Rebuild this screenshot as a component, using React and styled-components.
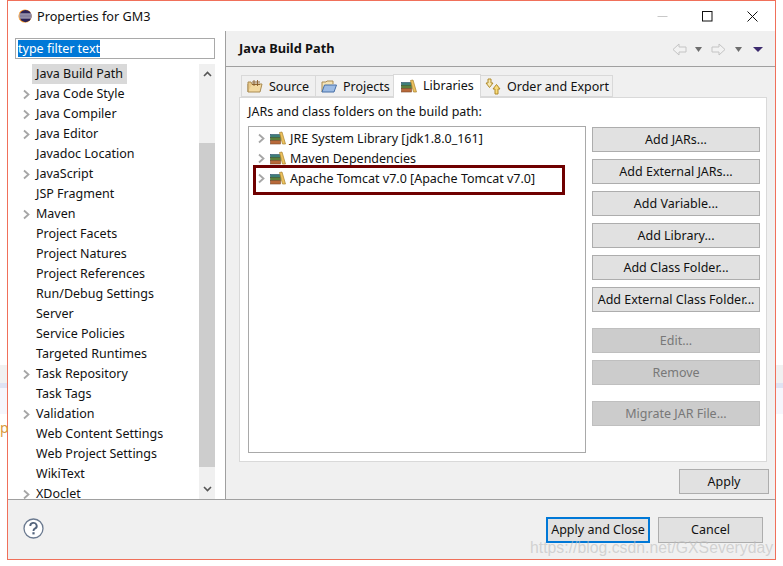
import React from "react";
import styled, { createGlobalStyle } from "styled-components";

const GlobalStyle = createGlobalStyle`
  html, body {
    margin: 0;
    background: #fff;
  }
  body {
    font-family: "Noto Sans", "Open Sans", sans-serif;
    font-size: 12.5px;
    color: #111;
  }
  * {
    box-sizing: border-box;
  }
`;

const Page = styled.div`
  position: relative;
  width: 783px;
  height: 566px;
  overflow: hidden;
  padding-left: 7px;
`;

const BackdropStrip = styled.div`
  position: absolute;
  left: ${(p) => (p.$right ? "776px" : "0")};
  top: ${(p) => p.$top}px;
  width: 7px;
  height: ${(p) => p.$height}px;
  background: ${(p) => p.$color};
`;

const BackdropLetter = styled.span`
  position: absolute;
  left: 0;
  top: 418px;
  color: #d89a3c;
  font-size: 14px;
`;

const Window = styled.div`
  width: 769px;
  height: 560px;
  border: 1px solid #f0705a;
  background: #fff;
  display: flex;
  flex-direction: column;
`;

const TitleBar = styled.div`
  height: 30px;
  flex: none;
  display: flex;
  align-items: center;
  padding-left: 10px;
`;

const TitleText = styled.span`
  flex: 1;
  margin-left: 5px;
  font-size: 12.7px;
`;

const WindowButton = styled.div`
  width: 45px;
  height: 30px;
  display: flex;
  align-items: center;
  justify-content: center;
`;

const Main = styled.div`
  flex: 1;
  min-height: 0;
  display: flex;
`;

const Sidebar = styled.div`
  width: 217px;
  flex: none;
  padding: 7px 0 0 7px;
  display: flex;
  flex-direction: column;
  background: #fff;
`;

const FilterBox = styled.div`
  width: 200px;
  height: 21px;
  border: 1px solid #a9a9a9;
  flex: none;
  display: flex;
  align-items: center;
  padding-left: 2px;
`;

const Selected = styled.span`
  background: #0078d7;
  color: #fff;
  line-height: 17px;
`;

const TreeArea = styled.div`
  flex: 1;
  min-height: 0;
  margin-top: 5px;
  display: flex;
  width: 200px;
  overflow: hidden;
`;

const Tree = styled.div`
  flex: 1;
  overflow: hidden;
`;

const TreeRow = styled.div`
  height: 20px;
  display: flex;
  align-items: center;
  padding-left: 7px;
  white-space: nowrap;
`;

const ArrowSlot = styled.div`
  width: 9px;
  margin-right: 5px;
  flex: none;
  display: flex;
  align-items: center;
`;

const TreeLabel = styled.span`
  padding: 0 4px;
  margin-left: -4px;
  line-height: 20px;
  background: ${(p) => (p.$active ? "#d9d9d9" : "transparent")};
`;

const Scrollbar = styled.div`
  width: 16px;
  flex: none;
  background: #f0f0f0;
  display: flex;
  flex-direction: column;
  align-items: center;
`;

const ScrollButton = styled.div`
  height: 20px;
  flex: none;
  display: flex;
  align-items: center;
  justify-content: center;
`;

const ScrollThumb = styled.div`
  width: 16px;
  height: 324px;
  margin-top: 59px;
  flex: none;
  background: #cdcdcd;
`;

const ScrollGap = styled.div`
  flex: 1;
`;

const Content = styled.div`
  flex: 1;
  min-width: 0;
  border-left: 1px solid #a0a0a0;
  background: #f0f0f0;
  display: flex;
  flex-direction: column;
`;

const ContentHeader = styled.div`
  height: 36px;
  flex: none;
  display: flex;
  align-items: center;
  justify-content: space-between;
  padding: 0 12px 2px 13px;
  border-bottom: 1px solid #a0a0a0;
`;

const HeaderTitle = styled.span`
  font-weight: 700;
  font-size: 12.8px;
`;

const NavIcons = styled.div`
  display: flex;
  align-items: center;
  padding-top: 3px;
`;

const NavSlot = styled.div`
  display: flex;
  align-items: center;
  margin-left: ${(p) => p.$gap}px;
`;

const ContentBody = styled.div`
  flex: 1;
  min-height: 0;
  padding: 8px 7px 0 13px;
  display: flex;
  flex-direction: column;
`;

const TabStrip = styled.div`
  height: 22px;
  flex: none;
  display: flex;
  align-items: flex-end;
  padding-left: 3px;
  position: relative;
  z-index: 1;
`;

const Tab = styled.div`
  height: ${(p) => (p.$active ? 24 : 22)}px;
  width: ${(p) => p.$width}px;
  margin-bottom: ${(p) => (p.$active ? -1 : 0)}px;
  padding-left: ${(p) => p.$pad}px;
  padding-bottom: ${(p) => (p.$active ? 2 : 0)}px;
  display: flex;
  align-items: center;
  gap: ${(p) => p.$iconGap}px;
  flex: none;
  background: ${(p) => (p.$active ? "#fff" : "#f0f0f0")};
  border: 1px solid #d9d9d9;
  border-bottom: ${(p) => (p.$active ? "none" : "1px solid #d9d9d9")};
  margin-left: -1px;
  white-space: nowrap;
`;

const TabPanel = styled.div`
  width: 528px;
  height: 365px;
  flex: none;
  background: #fff;
  border: 1px solid #d9d9d9;
  padding: 5px 8px 0;
  display: flex;
  flex-direction: column;
`;

const PanelLabel = styled.div`
  height: 18px;
  line-height: 18px;
  flex: none;
`;

const PanelRow = styled.div`
  display: flex;
  margin-top: 5px;
  gap: 6px;
`;

const ListBox = styled.div`
  width: 338px;
  height: 327px;
  flex: none;
  border: 1px solid #a9a9a9;
  padding: 1px 0 0 8px;
`;

const ListRow = styled.div`
  height: 20px;
  display: flex;
  align-items: center;
  white-space: nowrap;
  gap: 4px;
`;

const ButtonColumn = styled.div`
  width: 168px;
  flex: none;
  margin-top: 1px;
  display: flex;
  flex-direction: column;
  gap: 7px;
`;

const Button = styled.div`
  height: ${(p) => p.$height || 25}px;
  width: ${(p) => (p.$width ? `${p.$width}px` : "auto")};
  flex: none;
  display: flex;
  align-items: center;
  justify-content: center;
  padding-bottom: ${(p) => (p.$height ? 2 : 0)}px;
  white-space: nowrap;
  background: ${(p) => (p.$disabled ? "#cccccc" : "#e1e1e1")};
  color: ${(p) => (p.$disabled ? "#787878" : "#111")};
  border: ${(p) =>
    p.$default ? "2px solid #0078d7" : `1px solid ${p.$disabled ? "#bfbfbf" : "#adadad"}`};
  margin-top: ${(p) => p.$top || 0}px;
`;

const ApplyRow = styled.div`
  flex: none;
  display: flex;
  justify-content: flex-end;
  padding-top: 7px;
  margin-right: -1px;
`;

const Footer = styled.div`
  height: 60px;
  flex: none;
  background: #f0f0f0;
  border-top: 1px solid #a0a0a0;
  display: flex;
  align-items: flex-start;
  padding: 17px 12px 0 15px;
  gap: 8px;
`;

const HelpSlot = styled.div`
  flex: 1;
  padding-top: 1px;
`;

const Highlight = styled.div`
  position: absolute;
  left: 253px;
  top: 165px;
  width: 312px;
  height: 30px;
  border: 3px solid #6f0000;
  pointer-events: none;
`;

const Watermark = styled.div`
  position: absolute;
  left: 530px;
  top: 539px;
  font-family: "Liberation Sans", sans-serif;
  font-size: 15.8px;
  color: rgba(190, 190, 190, 0.62);
  white-space: nowrap;
`;

const Chevron = () => (
  <svg width="9" height="11" viewBox="0 0 9 11">
    <path d="M2 1.5 L6.5 5.5 L2 9.5" fill="none" stroke="#a6a6a6" strokeWidth="1.8" />
  </svg>
);

const LibraryIcon = () => (
  <svg width="16" height="14" viewBox="0 0 16 14">
    <rect x="0.5" y="3.5" width="10" height="3" fill="#3e7f78" stroke="#2b4f6a" strokeWidth="0.6" />
    <rect x="0.5" y="6.5" width="10" height="3" fill="#5d7f3a" stroke="#3d5a2c" strokeWidth="0.6" />
    <rect x="0.5" y="9.5" width="10" height="3.5" fill="#b8693a" stroke="#7c4a2a" strokeWidth="0.6" />
    <path d="M9.5 1.5 L12 1 L15.5 13 L12.5 13 Z" fill="#edc25e" stroke="#a8812e" strokeWidth="0.7" />
  </svg>
);

const SourceIcon = () => (
  <svg width="16" height="14" viewBox="0 0 16 14">
    <path d="M1 5 H15 L13 13 H1 Z" fill="#f3d9a0" stroke="#a98b52" />
    <path d="M1 13 V3 H4 L5 5" fill="#e9c98a" stroke="#a98b52" />
    <path d="M7 1 V7 M10.5 1 V7 M5 3 H13 M5 5.5 H13" fill="none" stroke="#8b5f2a" strokeWidth="0.9" />
  </svg>
);

const ProjectIcon = () => (
  <svg width="16" height="14" viewBox="0 0 16 14">
    <path d="M1 13 V3 H5 L6 2 H12 V5" fill="#f4e3b5" stroke="#a98b52" />
    <path d="M1 13 L3.5 6 H15.5 L13 13 Z" fill="#9cbbe4" stroke="#466fa6" />
  </svg>
);

const OrderIcon = () => (
  <svg width="17" height="17" viewBox="0 0 17 17">
    <path d="M4 1 H7 V5 H9 L5.5 9.5 L2 5 H4 Z" fill="#f6e8b0" stroke="#b08a2a" />
    <path d="M11 16 H14 V11 H16 L12.5 6.5 L9 11 H11 Z" fill="#f9dc7a" stroke="#b08a2a" />
  </svg>
);

const EclipseLogo = () => (
  <svg width="14" height="14" viewBox="0 0 16 16">
    <circle cx="8" cy="8" r="7.5" fill="#f7941e" />
    <circle cx="8.6" cy="8" r="7" fill="#2c2255" />
    <path d="M1.5 5.8 H15 M1 8 H15.5 M1.5 10.2 H15" stroke="#fff" strokeWidth="1" />
  </svg>
);

const NavArrow = ({ flip }) => (
  <svg width="15" height="13" viewBox="0 0 15 13" style={flip ? { transform: "scaleX(-1)" } : undefined}>
    <path d="M1 6.5 L7 1 V4 H14 V9 H7 V12 Z" fill="#f2f2f2" stroke="#c4c4c4" />
  </svg>
);

const Caret = ({ color, width = 7 }) => (
  <svg width={width} height="5" viewBox="0 0 8 5" preserveAspectRatio="none">
    <path d="M0 0 H8 L4 5 Z" fill={color} />
  </svg>
);

const HelpIcon = () => (
  <svg width="21" height="21" viewBox="0 0 21 21">
    <circle cx="10.5" cy="10.5" r="9.5" fill="#fff" stroke="#6b7a90" strokeWidth="1.3" />
    <path d="M7.3 8 A3.2 3 0 1 1 11.8 10.6 Q10.5 11.3 10.5 13" fill="none" stroke="#54647c" strokeWidth="1.9" />
    <rect x="9.4" y="14.2" width="2.2" height="2.2" fill="#54647c" />
  </svg>
);

const treeItems = [
  ["Java Build Path", false],
  ["Java Code Style", true],
  ["Java Compiler", true],
  ["Java Editor", true],
  ["Javadoc Location", false],
  ["JavaScript", true],
  ["JSP Fragment", false],
  ["Maven", true],
  ["Project Facets", false],
  ["Project Natures", false],
  ["Project References", false],
  ["Run/Debug Settings", false],
  ["Server", false],
  ["Service Policies", false],
  ["Targeted Runtimes", false],
  ["Task Repository", true],
  ["Task Tags", false],
  ["Validation", true],
  ["Web Content Settings", false],
  ["Web Project Settings", false],
  ["WikiText", false],
  ["XDoclet", true],
];

const libraries = [
  "JRE System Library [jdk1.8.0_161]",
  "Maven Dependencies",
  "Apache Tomcat v7.0 [Apache Tomcat v7.0]",
];

const sideButtons = [
  ["Add JARs...", 0, false],
  ["Add External JARs...", 0, false],
  ["Add Variable...", 0, false],
  ["Add Library...", 0, false],
  ["Add Class Folder...", 0, false],
  ["Add External Class Folder...", 0, false],
  ["Edit...", 9, true],
  ["Remove", 0, true],
  ["Migrate JAR File...", 9, true],
];

export default function App() {
  return (
    <Page>
      <GlobalStyle />
      <BackdropStrip $top={365} $height={18} $color="#f1f1f1" />
      <BackdropStrip $top={383} $height={5} $color="#dfe3f3" />
      <BackdropStrip $top={388} $height={26} $color="#f6f6fc" />
      <BackdropStrip $right $top={365} $height={18} $color="#f1f1f1" />
      <BackdropStrip $right $top={383} $height={5} $color="#dfe3f3" />
      <BackdropStrip $right $top={388} $height={26} $color="#f6f6fc" />
      <BackdropLetter>p</BackdropLetter>
      <Window>
        <TitleBar>
          <EclipseLogo />
          <TitleText>Properties for GM3</TitleText>
          <WindowButton>
            <svg width="11" height="11" viewBox="0 0 11 11">
              <path d="M0.5 5.5 H10.5" stroke="#c8c8c8" />
            </svg>
          </WindowButton>
          <WindowButton>
            <svg width="11" height="11" viewBox="0 0 11 11">
              <rect x="0.5" y="0.5" width="9.5" height="9.5" fill="none" stroke="#111" />
            </svg>
          </WindowButton>
          <WindowButton>
            <svg width="11" height="11" viewBox="0 0 11 11">
              <path d="M0.5 0.5 L10.5 10.5 M10.5 0.5 L0.5 10.5" stroke="#111" />
            </svg>
          </WindowButton>
        </TitleBar>
        <Main>
          <Sidebar>
            <FilterBox>
              <Selected>type filter text</Selected>
            </FilterBox>
            <TreeArea>
              <Tree>
                {treeItems.map(([label, hasChildren]) => (
                  <TreeRow key={label}>
                    <ArrowSlot>{hasChildren && <Chevron />}</ArrowSlot>
                    <TreeLabel $active={label === "Java Build Path"}>{label}</TreeLabel>
                  </TreeRow>
                ))}
              </Tree>
              <Scrollbar>
                <ScrollButton>
                  <svg width="9" height="6" viewBox="0 0 9 6">
                    <path d="M1 5 L4.5 1.5 L8 5" fill="none" stroke="#555" strokeWidth="1.6" />
                  </svg>
                </ScrollButton>
                <ScrollThumb />
                <ScrollGap />
                <ScrollButton>
                  <svg width="9" height="6" viewBox="0 0 9 6">
                    <path d="M1 1 L4.5 4.5 L8 1" fill="none" stroke="#555" strokeWidth="1.6" />
                  </svg>
                </ScrollButton>
              </Scrollbar>
            </TreeArea>
          </Sidebar>
          <Content>
            <ContentHeader>
              <HeaderTitle>Java Build Path</HeaderTitle>
              <NavIcons>
                <NavArrow />
                <NavSlot $gap={8}><Caret color="#6e6e6e" /></NavSlot>
                <NavSlot $gap={9}><NavArrow flip /></NavSlot>
                <NavSlot $gap={9}><Caret color="#6e6e6e" /></NavSlot>
                <NavSlot $gap={11}><Caret color="#3c2a6e" width={10} /></NavSlot>
              </NavIcons>
            </ContentHeader>
            <ContentBody>
              <TabStrip>
                <Tab $width={75} $pad={5} $iconGap={6}>
                  <SourceIcon />
                  Source
                </Tab>
                <Tab $width={79} $pad={5} $iconGap={6}>
                  <ProjectIcon />
                  Projects
                </Tab>
                <Tab $active $width={88} $pad={7} $iconGap={6}>
                  <LibraryIcon />
                  Libraries
                </Tab>
                <Tab $width={133} $pad={3} $iconGap={6}>
                  <OrderIcon />
                  Order and Export
                </Tab>
              </TabStrip>
              <TabPanel>
                <PanelLabel>JARs and class folders on the build path:</PanelLabel>
                <PanelRow>
                  <ListBox>
                    {libraries.map((lib) => (
                      <ListRow key={lib}>
                        <Chevron />
                        <LibraryIcon />
                        {lib}
                      </ListRow>
                    ))}
                  </ListBox>
                  <ButtonColumn>
                    {sideButtons.map(([label, top, disabled]) => (
                      <Button key={label} $top={top} $disabled={disabled}>
                        {label}
                      </Button>
                    ))}
                  </ButtonColumn>
                </PanelRow>
              </TabPanel>
              <ApplyRow>
                <Button $width={90}>Apply</Button>
              </ApplyRow>
            </ContentBody>
          </Content>
        </Main>
        <Footer>
          <HelpSlot>
            <HelpIcon />
          </HelpSlot>
          <Button $width={104} $height={26} $default>
            Apply and Close
          </Button>
          <Button $width={105} $height={26}>
            Cancel
          </Button>
        </Footer>
      </Window>
      <Highlight />
      <Watermark>https://blog.csdn.net/GXSeveryday</Watermark>
    </Page>
  );
}
